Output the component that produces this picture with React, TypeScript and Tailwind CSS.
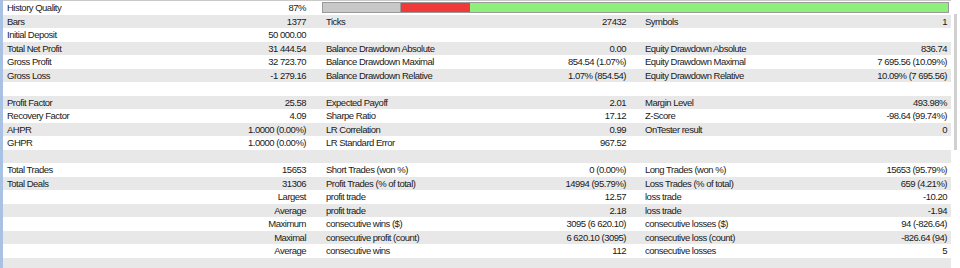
type Cell = [string, string] | null;

const rows: Cell[][] = [
  [["History Quality", "87%"], null, null],
  [["Bars", "1377"], ["Ticks", "27432"], ["Symbols", "1"]],
  [["Initial Deposit", "50 000.00"], null, null],
  [["Total Net Profit", "31 444.54"], ["Balance Drawdown Absolute", "0.00"], ["Equity Drawdown Absolute", "836.74"]],
  [["Gross Profit", "32 723.70"], ["Balance Drawdown Maximal", "854.54 (1.07%)"], ["Equity Drawdown Maximal", "7 695.56 (10.09%)"]],
  [["Gross Loss", "-1 279.16"], ["Balance Drawdown Relative", "1.07% (854.54)"], ["Equity Drawdown Relative", "10.09% (7 695.56)"]],
  [null, null, null],
  [["Profit Factor", "25.58"], ["Expected Payoff", "2.01"], ["Margin Level", "493.98%"]],
  [["Recovery Factor", "4.09"], ["Sharpe Ratio", "17.12"], ["Z-Score", "-98.64 (99.74%)"]],
  [["AHPR", "1.0000 (0.00%)"], ["LR Correlation", "0.99"], ["OnTester result", "0"]],
  [["GHPR", "1.0000 (0.00%)"], ["LR Standard Error", "967.52"], null],
  [null, null, null],
  [["Total Trades", "15653"], ["Short Trades (won %)", "0 (0.00%)"], ["Long Trades (won %)", "15653 (95.79%)"]],
  [["Total Deals", "31306"], ["Profit Trades (% of total)", "14994 (95.79%)"], ["Loss Trades (% of total)", "659 (4.21%)"]],
  [["", "Largest"], ["profit trade", "12.57"], ["loss trade", "-10.20"]],
  [["", "Average"], ["profit trade", "2.18"], ["loss trade", "-1.94"]],
  [["", "Maximum"], ["consecutive wins ($)", "3095 (6 620.10)"], ["consecutive losses ($)", "94 (-826.64)"]],
  [["", "Maximal"], ["consecutive profit (count)", "6 620.10 (3095)"], ["consecutive loss (count)", "-826.64 (94)"]],
  [["", "Average"], ["consecutive wins", "112"], ["consecutive losses", "5"]],
  [null, null, null],
];

const colClass = [
  "w-[317px] pl-1 pr-[14px]",
  "w-[320px] pl-[6px] pr-[14px]",
  "w-[311px] pl-[5px] pr-[4px]",
];

function QualityBar() {
  return (
    <div className="flex items-center w-[631px] pl-[2px] pr-[2px]">
      <div className="flex w-full h-[11px] border border-[#9a9a9a]">
        <div className="w-[78px] bg-[#c8c8c8] border-r border-[#9a9a9a]" />
        <div className="w-[69px] bg-[#f03a3a]" />
        <div className="flex-1 bg-[#8ef07a]" />
      </div>
    </div>
  );
}

export default function App() {
  return (
    <div
      className="w-[960px] h-[268px] overflow-hidden bg-white flex text-[9.5px] tracking-[-0.5px] text-[#1a1a1a]"
      style={{ fontFamily: '"Liberation Sans", Arial, sans-serif' }}
    >
      <div className="w-[3px] bg-[#a9c1e3]" />
      <div className="w-[948px] border-t border-[#c9c9c9]">
        {rows.map((row, i) => (
          <div
            key={i}
            className={`flex h-[13.5px] leading-[13.5px] ${i % 2 === 1 ? "bg-[#e8e8e8]" : "bg-white"}`}
          >
            {i === 0 ? (
              <>
                <div className={`flex justify-between ${colClass[0]}`}>
                  <span>History Quality</span>
                  <span>87%</span>
                </div>
                <QualityBar />
              </>
            ) : (
              row.map((cell, j) => (
                <div key={j} className={`flex justify-between whitespace-nowrap ${colClass[j]}`}>
                  <span>{cell ? cell[0] : ""}</span>
                  <span>{cell ? cell[1] : ""}</span>
                </div>
              ))
            )}
          </div>
        ))}
      </div>
      <div className="flex-1 bg-white flex justify-center pt-[14px]">
        <div className="w-[3px] h-[136px] bg-[#d0d0d0]" />
      </div>
    </div>
  );
}
